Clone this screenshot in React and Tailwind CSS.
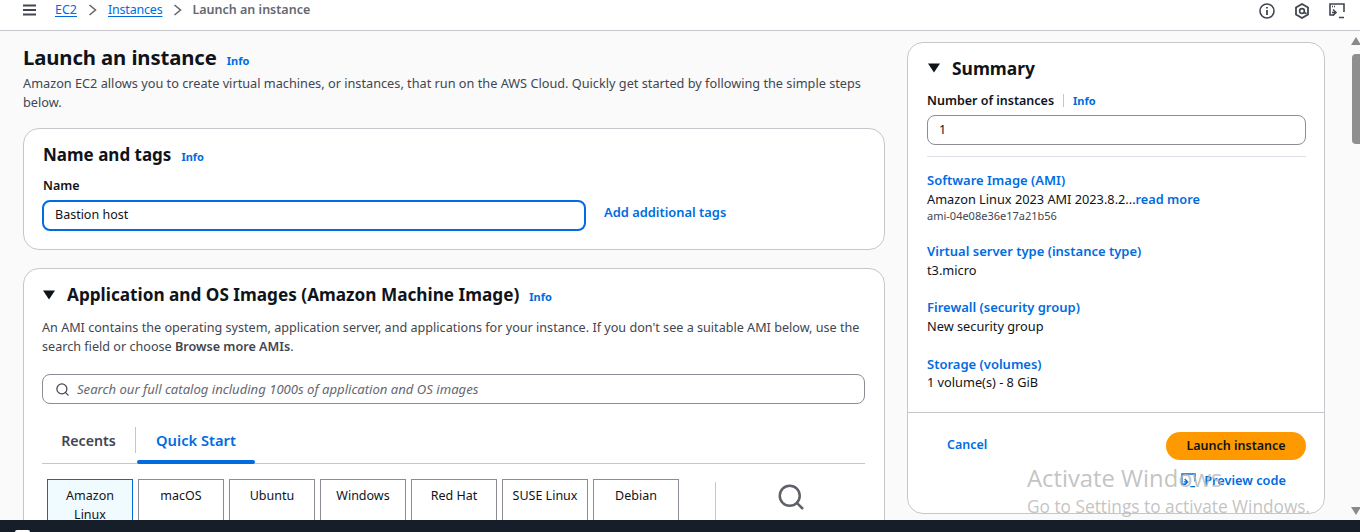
import { Search } from 'lucide-react'

const link = 'text-[#006ce0]'

const Info = ({ className = '' }) => (
  <span className={`text-[11px] font-bold text-[#006ce0] ${className}`}>Info</span>
)

const Caret = ({ className = '' }) => (
  <svg width="14" height="10" viewBox="0 0 14 10" className={className}>
    <path d="M1 0.5h12L7 9.5z" fill="#0f141a" />
  </svg>
)

const osTabs = ['macOS', 'Ubuntu', 'Windows', 'Red Hat', 'SUSE Linux', 'Debian']

const SummaryItem = ({ title, value, titleClass = 'leading-[19px]' }) => (
  <div>
    <div className={`text-[13px] font-semibold ${titleClass} ${link}`}>{title}</div>
    <div className="text-[12.75px] leading-[19px] text-[#0f141a]">{value}</div>
  </div>
)

export default function App() {
  return (
    <div className="relative h-[532px] w-[1360px] overflow-hidden flex flex-col bg-[#fafafa] font-['Noto_Sans','Open_Sans',sans-serif] text-[#0f141a]">
      {/* Top breadcrumbs bar */}
      <header className="h-[31px] shrink-0 bg-white border-b border-[#c6c6cd] flex items-start pl-[22px] pr-[15px]">
        <svg width="15" height="12" viewBox="0 0 15 12" className="mt-[4px]">
          <path d="M1 1.5h13M1 6h13M1 10.5h13" stroke="#424650" strokeWidth="2" />
        </svg>
        <nav className="ml-[18px] flex items-center text-[12.5px] leading-[19px]">
          <span className={`${link} underline underline-offset-2`}>EC2</span>
          <svg width="9" height="12" viewBox="0 0 9 12" className="mx-[11px]">
            <path d="M1.5 1l6 5-6 5" fill="none" stroke="#656871" strokeWidth="1.6" />
          </svg>
          <span className={`${link} underline underline-offset-2 tracking-[-0.2px]`}>Instances</span>
          <svg width="9" height="12" viewBox="0 0 9 12" className="ml-[11px] mr-[10px]">
            <path d="M1.5 1l6 5-6 5" fill="none" stroke="#656871" strokeWidth="1.6" />
          </svg>
          <span className="font-semibold text-[#656871]">Launch an instance</span>
        </nav>
        <div className="ml-auto flex items-center gap-[19px] mt-[3px]">
          <svg width="16" height="16" viewBox="0 0 16 16">
            <circle cx="8" cy="8" r="7" fill="none" stroke="#424650" strokeWidth="1.6" />
            <path d="M8 7v5" stroke="#424650" strokeWidth="1.8" />
            <path d="M8 4v1.6" stroke="#424650" strokeWidth="1.8" />
          </svg>
          <svg width="16" height="16" viewBox="0 0 16 16">
            <path d="M8 1l6 3.5v7L8 15l-6-3.5v-7z" fill="none" stroke="#424650" strokeWidth="1.8" />
            <circle cx="8" cy="8" r="2.4" fill="none" stroke="#424650" strokeWidth="1.6" />
            <path d="M9.5 9l3 1.8" stroke="#424650" strokeWidth="1.6" />
          </svg>
          <svg width="16" height="16" viewBox="0 0 16 16">
            <path d="M5 12H1V1h14v8" fill="none" stroke="#424650" strokeWidth="1.6" />
            <path d="M3 3.5h4" stroke="#424650" strokeWidth="1.4" strokeDasharray="1 1" />
            <path d="M4 6.5l3 3-3 3M3 9.5h3M10 14.5h5" fill="none" stroke="#424650" strokeWidth="1.6" />
          </svg>
        </div>
      </header>

      {/* Page body */}
      <main className="flex-1 min-h-0 flex overflow-hidden">
        <section className="w-[885px] shrink-0 pl-[23px] pt-[11px]">
          <div className="flex items-baseline">
            <h1 className="text-[20.3px] leading-[30px] font-bold tracking-[-0.1px]">Launch an instance</h1>
            <Info className="ml-[10px]" />
          </div>
          <p className="mt-[2px] w-[850px] text-[12.72px] leading-[19px] text-[#424650]">
            Amazon EC2 allows you to create virtual machines, or instances, that run on the AWS Cloud. Quickly get started by following the simple steps below.
          </p>

          <div className="mt-[16px] h-[122px] rounded-[16px] border border-[#c6c6cd] bg-white pl-[18px] pt-[13px]">
            <div className="flex items-baseline ml-px">
              <h2 className="text-[17px] leading-[26px] font-bold">Name and tags</h2>
              <Info className="ml-[10px]" />
            </div>
            <div className="ml-px mt-[9px] text-[12.5px] leading-[17px] font-semibold">Name</div>
            <div className="mt-[6px] flex items-start">
              <div className="w-[544px] h-[31px] rounded-[8px] border-2 border-[#006ce0] bg-white pl-[11px] flex items-center text-[12.5px]">
                Bastion host
              </div>
              <span className={`ml-[18px] mt-[3px] text-[12.9px] leading-[19px] font-semibold ${link}`}>Add additional tags</span>
            </div>
          </div>

          <div className="mt-[18px] h-[300px] rounded-[16px] border border-[#c6c6cd] bg-white pl-[18px] pr-[19px] pt-[13px]">
            <div className="flex items-center">
              <Caret className="mr-[11px]" />
              <h2 className="text-[17.2px] leading-[26px] font-bold">Application and OS Images (Amazon Machine Image)</h2>
              <Info className="ml-[10px] mt-[4px]" />
            </div>
            <p className="mt-[10px] text-[12.62px] leading-[19px] text-[#424650]">
              An AMI contains the operating system, application server, and applications for your instance. If you don't see a suitable AMI below, use the search field or choose <span className="font-semibold">Browse more AMIs</span>.
            </p>
            <div className="mt-[18px] h-[30px] rounded-[8px] border border-[#8c8c94] flex items-center pl-[12px] gap-[7px]">
              <Search size={15} strokeWidth={2} className="text-[#424650]" />
              <span className="text-[13.1px] italic text-[#656871] translate-y-px">Search our full catalog including 1000s of application and OS images</span>
            </div>

            <div className="mt-[11px] relative h-[49px] border-b border-[#c6c6cd] flex">
              <div className="w-[94px] h-[26px] mt-[12px] border-r border-[#c6c6cd] flex items-center justify-center text-[14.2px] font-semibold text-[#424650]">
                <span className="translate-y-px">Recents</span>
              </div>
              <div className="relative w-[118px] ml-px flex justify-center pt-[12px]">
                <span className={`text-[14.7px] leading-[26px] font-semibold ${link}`}>Quick Start</span>
                <div className="absolute left-0 right-0 bottom-[-1px] h-[4px] rounded-[2px] bg-[#006ce0]" />
              </div>
            </div>

            <div className="mt-[15px] ml-[5px] flex items-start">
              <div className="flex gap-[5px]">
                <div className="w-[86px] h-[60px] border border-[#006ce0] bg-[#f0fbff] px-[8px] pt-[6px] text-center text-[12.5px] leading-[19px]">
                  Amazon Linux
                </div>
                {osTabs.map((name) => (
                  <div key={name} className="w-[86px] h-[60px] border border-[#8c8c94] pt-[6px] text-center text-[12.5px] leading-[19px]">
                    {name}
                  </div>
                ))}
              </div>
              <div className="ml-[36px] mt-[3px] h-[60px] w-[150px] border-l border-[#c6c6cd] flex flex-col items-center">
                <Search size={30} strokeWidth={2} className="text-[#5f6169]" />
                <span className={`mt-[7px] text-[12.5px] leading-[19px] font-semibold whitespace-nowrap ${link}`}>Browse more AMIs</span>
              </div>
            </div>
          </div>
        </section>

        {/* Summary panel */}
        <aside className="ml-[22px] mt-[11px] w-[418px] h-[472px] shrink-0 rounded-[16px] border border-[#c6c6cd] bg-white flex flex-col">
          <div className="flex-1 pl-[19px] pr-[18px] pt-[12px]">
            <div className="flex items-center">
              <Caret className="mr-[11px]" />
              <h2 className="text-[17.4px] leading-[26px] font-bold">Summary</h2>
            </div>
            <div className="mt-[10px] flex items-center text-[12.5px] leading-[19px]">
              <span className="font-semibold">Number of instances</span>
              <span className="mx-[9px] h-[13px] border-l border-[#c6c6cd]" />
              <Info />
            </div>
            <div className="mt-[5px] h-[30px] rounded-[8px] border border-[#8c8c94] flex items-center pl-[11px] text-[12.5px]">1</div>
            <div className="mt-[11px] border-t border-[#e0e0e4]" />
            <div className="mt-[14px] flex flex-col gap-[18px]">
              <div className="pb-px">
                <div className={`text-[13px] leading-[19px] font-semibold ${link}`}>Software Image (AMI)</div>
                <div className="text-[12.75px] leading-[19px]">
                  Amazon Linux 2023 AMI 2023.8.2...<span className={`font-semibold ${link}`}>read more</span>
                </div>
                <div className="text-[11px] leading-[14px] text-[#424650]">ami-04e08e36e17a21b56</div>
              </div>
              <SummaryItem title="Virtual server type (instance type)" value="t3.micro" />
              <SummaryItem title="Firewall (security group)" value="New security group" />
              <div className="mt-px">
                <SummaryItem title="Storage (volumes)" value="1 volume(s) - 8 GiB" titleClass="leading-[18px]" />
              </div>
            </div>
          </div>
          <div className="h-[101px] shrink-0 border-t border-[#c6c6cd] pl-[19px] pr-[18px] pt-[19px] flex justify-between items-start">
            <span className={`ml-[20px] mt-[4px] text-[12.5px] font-semibold ${link}`}>Cancel</span>
            <div className="flex flex-col items-center w-[140px]">
              <div className="w-[140px] h-[28px] rounded-full bg-[#ff9900] flex items-center justify-center text-[12.5px] font-semibold">
                Launch instance
              </div>
              <div className={`mt-[11px] pr-[5px] flex items-center gap-[8px] text-[12.75px] font-semibold ${link}`}>
                <svg width="15" height="15" viewBox="0 0 16 16">
                  <path d="M5 12H1V1h14v8" fill="none" stroke="#006ce0" strokeWidth="1.5" />
                  <path d="M4 6.5l3 3-3 3M3 9.5h3M10 14.5h5" fill="none" stroke="#006ce0" strokeWidth="1.5" />
                </svg>
                Preview code
              </div>
            </div>
          </div>
        </aside>

        {/* Browser scrollbar */}
        <div className="ml-auto w-[11px] relative overflow-hidden">
          <div className="absolute top-[6px] right-[-1px] w-[10px] h-0 border-x-[5px] border-x-transparent border-b-[8px] border-b-[#8a8a8a]" />
          <div className="absolute top-[23px] right-0 w-[8px] h-[90px] rounded-l-[4px] bg-[#8f8f8f]" />
          <div className="absolute bottom-[5px] right-[-1px] w-[10px] h-0 border-x-[5px] border-x-transparent border-t-[8px] border-t-[#8a8a8a]" />
        </div>
      </main>

      {/* Windows taskbar edge */}
      <footer className="h-[12px] shrink-0 bg-[#161e29] relative z-10 pl-[15px] pt-[10px]">
        <div className="w-[15px] h-[2px] rounded-t-[3px] bg-white" />
      </footer>

      {/* Activate Windows watermark */}
      <div className="absolute left-[1027px] top-[463px] z-20 font-['Open_Sans',sans-serif] text-[#b4b4b4]/80 pointer-events-none whitespace-nowrap">
        <div className="text-[23.8px] leading-[30px]">Activate Windows</div>
        <div className="text-[17.3px] leading-[24px] mt-[2px]">Go to Settings to activate Windows.</div>
      </div>
    </div>
  )
}
